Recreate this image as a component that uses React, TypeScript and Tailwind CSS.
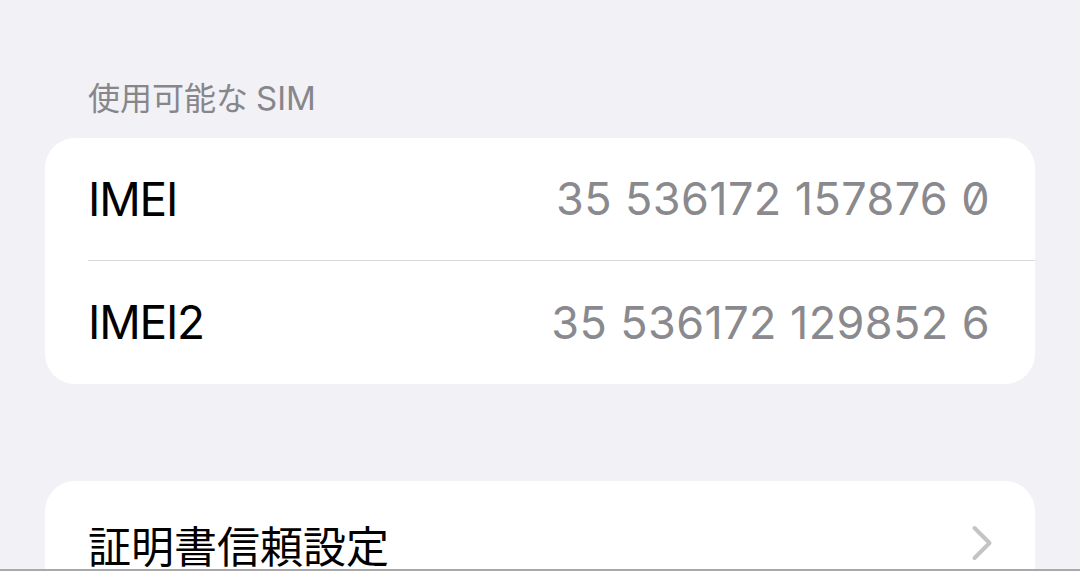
import { ChevronRight } from 'lucide-react';

const latin = "font-['Inter','Noto_Sans_CJK_JP',sans-serif]";

interface InfoRowProps {
    label: string,
    value: string,
    divider?: boolean
}

function InfoRow({ label, value, divider }: InfoRowProps) {
    return (
        <div className="pl-[43px]">
            <div className={`flex h-[123px] items-center justify-between pr-[45px] ${divider ? 'border-b border-[#d8d8dc]' : ''}`}>
                <span className="text-[46px] tracking-[-1.2px] text-black">{label}</span>
                <span className="text-[45px] text-[#8a8a8e] tracking-[0.4px] [font-feature-settings:'zero']">{value}</span>
            </div>
        </div>
    );
}

export default function App() {
    return (
        <div className={`h-[571px] overflow-hidden bg-[#f1f1f6] border-b-2 border-[#a9a9ab] px-[45px] ${latin}`}>
            <p className="pt-[78px] pl-[43px] text-[32px] leading-[40px] text-[#86868b] mb-[19px]">
                使用可能な<span className="ml-[8px] text-[33px]">SIM</span>
            </p>

            <div className="rounded-[30px] bg-white">
                <InfoRow label="IMEI" value="35 536172 157876 0" divider />
                <InfoRow label="IMEI2" value="35 536172 129852 6" />
            </div>

            <div className="mt-[97px] rounded-[30px] bg-white pl-[43px] pr-[23px]">
                <div className="flex h-[123px] items-center justify-between">
                    <span className="text-[43px] text-black font-['Noto_Sans_CJK_JP',sans-serif] pt-[4px]">証明書信頼設定</span>
                    <ChevronRight className="h-[60px] w-[60px] -my-[10px] text-[#c4c4c7]" strokeWidth={1.6} />
                </div>
            </div>
        </div>
    );
}
